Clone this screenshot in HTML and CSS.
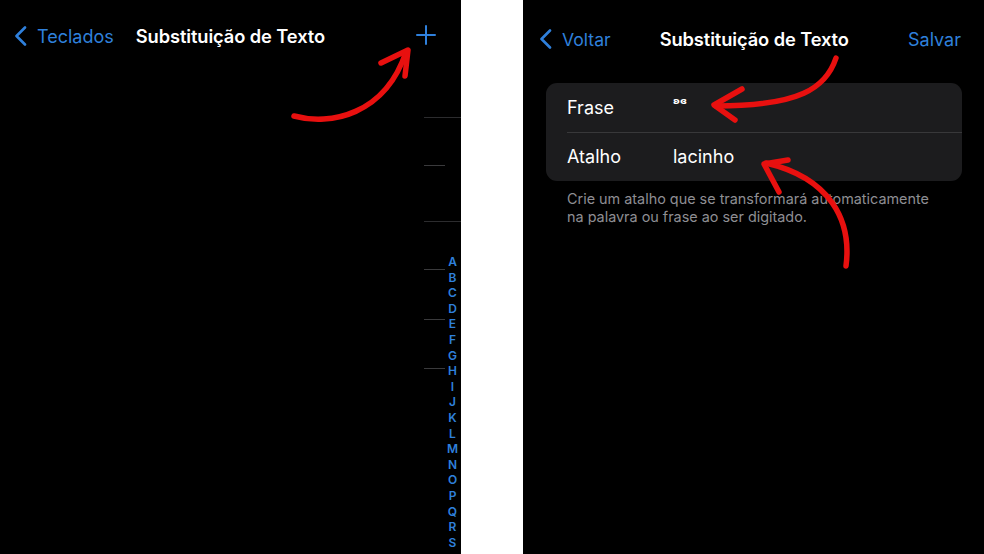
FILE: index.html
```html
<!DOCTYPE html>
<html lang="pt">
<head>
<meta charset="utf-8">
<link rel="stylesheet" href="styles.css">
</head>
<body>
<div class="stage">
  <section class="panel left">
    <header class="nav">
      <div class="back">
        <svg class="chev" width="13" height="20" viewBox="0 0 13 20"><path d="M11 1.5 L2.5 10 L11 18.5" fill="none" stroke="#2f80dc" stroke-width="2.6" stroke-linecap="round" stroke-linejoin="round"/></svg>
        <span>Teclados</span>
      </div>
      <h1 class="title">Substituição de Texto</h1>
      <svg class="plus" width="20" height="20" viewBox="0 0 20 20"><path d="M10 1 V19 M1 10 H19" stroke="#2f80dc" stroke-width="2" stroke-linecap="round"/></svg>
    </header>
    <div class="list">
      <div class="sep s1"></div>
      <div class="sep s2 short"></div>
      <div class="sep s3"></div>
      <div class="sep s4 short"></div>
      <div class="sep s5 short"></div>
      <div class="sep s6 short"></div>
      <div class="index">
        <span>A</span><span>B</span><span>C</span><span>D</span><span>E</span><span>F</span><span>G</span><span>H</span><span>I</span><span>J</span><span>K</span><span>L</span><span>M</span><span>N</span><span>O</span><span>P</span><span>Q</span><span>R</span><span>S</span>
      </div>
    </div>
  </section>
  <div class="gap"></div>
  <section class="panel right">
    <header class="nav nav2">
      <div class="back">
        <svg class="chev" width="13" height="20" viewBox="0 0 13 20"><path d="M11 1.5 L2.5 10 L11 18.5" fill="none" stroke="#2f80dc" stroke-width="2.6" stroke-linecap="round" stroke-linejoin="round"/></svg>
        <span>Voltar</span>
      </div>
      <h1 class="title">Substituição de Texto</h1>
      <span class="save">Salvar</span>
    </header>
    <div class="card">
      <div class="field">
        <span class="label">Frase</span>
        <span class="value bow">ʚɞ</span>
      </div>
      <div class="field">
        <span class="label">Atalho</span>
        <span class="value">lacinho</span>
      </div>
    </div>
    <p class="hint">Crie um atalho que se transformará automaticamente na palavra ou frase ao ser digitado.</p>
  </section>
  <svg class="arrows" width="984" height="554" viewBox="0 0 984 554">
    <g fill="none" stroke="#e8100f" stroke-width="5.5" stroke-linecap="round" stroke-linejoin="round">
      <path d="M294 116 C330 126 385 115 406 52"/>
      <path d="M381 63 L408 50 L405 76"/>
      <path d="M836 58 C826 88 800 106 716 106"/>
      <path d="M742 89 L714 105 L735 120"/>
      <path d="M846 266 C852 220 830 178 766 163"/>
      <path d="M788 160 L764 164 L779 192"/>
    </g>
  </svg>
</div>
</body>
</html>
```
FILE: styles.css
```css
* { box-sizing: border-box; }
html, body { margin: 0; padding: 0; background: #fff; }
body { font-family: Inter, "Noto Sans", "Liberation Sans", sans-serif; }
.stage { position: relative; width: 984px; height: 554px; display: flex; overflow: hidden; }
.panel { width: 461px; height: 554px; background: #000; display: flex; flex-direction: column; }
.gap { width: 62px; background: #fff; }
.nav { height: 72px; display: flex; align-items: center; padding: 0 25px 0 14px; }
.back { display: flex; align-items: center; gap: 10px; color: #2f80dc; font-size: 18px; }
.chev { flex: none; }
.title { margin: 0 0 0 22px; color: #fff; font-size: 18.3px; font-weight: 600; letter-spacing: -0.1px; flex: 1; }
.plus { flex: none; margin-top: -2px; }
.list { flex: 1; display: flex; justify-content: flex-end; position: relative; }
.sep { position: absolute; right: 0; height: 1px; background: #2c2c2e; width: 37px; }
.sep.short { width: 21px; right: 16px; background: #3a3a3c; }
.s1 { top: 45px; }
.s2 { top: 93px; }
.s3 { top: 149px; }
.s4 { top: 197px; }
.s5 { top: 247px; }
.s6 { top: 296px; }
.index { width: 17px; display: flex; flex-direction: column; align-items: center; padding-top: 182px; }
.index span { color: #2f80dc; font-size: 12px; font-weight: 600; line-height: 15.6px; }
.nav2 { padding: 0 23px 0 16px; height: 78px; }
.nav2 .back { font-size: 17.6px; }
.nav2 .title { margin-left: 49px; flex: 0 0 auto; }
.save { margin-left: auto; color: #2f80dc; font-size: 18px; }
.card { margin: 5px 0 0 23px; width: 416px; background: #1c1c1e; border-radius: 11px; padding-left: 21px; }
.field { height: 49px; display: flex; align-items: center; color: #fff; font-size: 18px; }
.field + .field { border-top: 1px solid #38383a; padding-bottom: 2px; }
.field:first-child { padding-bottom: 1px; }
.label { width: 106px; }
.bow { font-family: "DejaVu Sans", sans-serif; font-size: 9.5px; align-self: flex-start; margin-top: 12px; font-weight: bold; }
.hint { margin: 9px 0 0 44px; width: 380px; color: #8e8e93; font-size: 14.4px; line-height: 18px; }
.arrows { position: absolute; left: 0; top: 0; pointer-events: none; }
```
